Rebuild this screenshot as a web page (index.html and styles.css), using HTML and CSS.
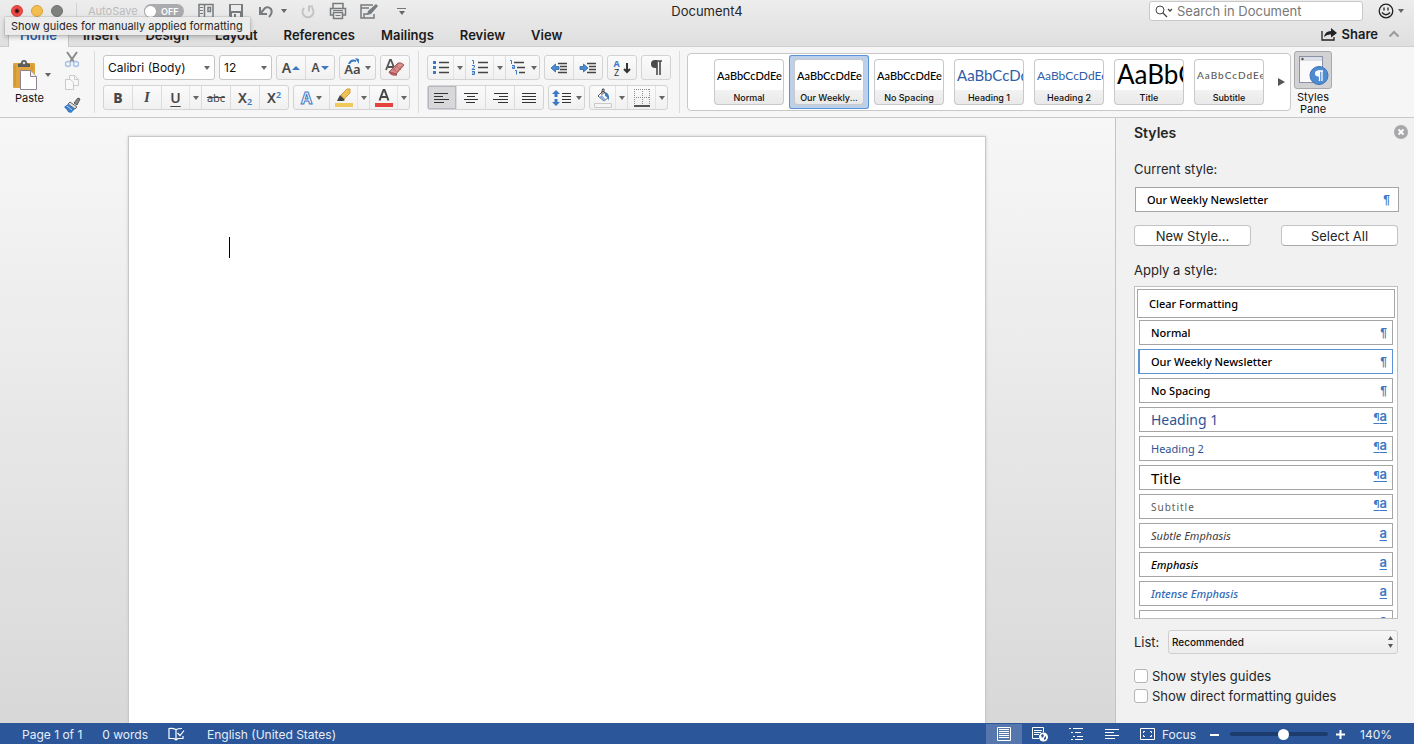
FILE: index.html
```html
<!DOCTYPE html>
<html lang="en">
<head>
    <meta charset="UTF-8">
    <meta name="viewport" content="width=device-width, initial-scale=1.0">
    <title>Document4</title>
    <link rel="stylesheet" href="styles.css">
</head>
<body>
    <header class="titlebar">
        <div class="quick">
            <button class="light red" aria-label="Close"></button>
            <button class="light yellow" aria-label="Minimize"></button>
            <button class="light gray" aria-label="Zoom"></button>
            <span class="line"></span>
            <span class="autosave">AutoSave</span>
            <button class="toggle" role="switch" aria-checked="false" aria-label="AutoSave"><i></i>OFF</button>
            <button class="tool" aria-label="Sidebar"><svg width="18" height="18" viewBox="0 0 18 18"><path d="M2 2.500h14v13H2zM7.500 2v14M11 5.500h2.500v4H11z" fill="none" stroke="#777b7d" stroke-width="1.500"/><path d="M3 5.500h3M3 8.500h3M3 11.500h3" stroke="#777b7d"/></svg></button>
            <button class="tool" aria-label="Save"><svg width="18" height="18" viewBox="0 0 18 18"><path d="M2 2h14v14H4l-2-2z" fill="#777b7d"/><path d="M4 3h10v6H4zM5 11h8v5H5z" fill="#ececec"/><path d="M7 12h2v4H7z" fill="#777b7d"/></svg></button>
            <button class="tool undo" aria-label="Undo"><svg width="18" height="18" viewBox="0 0 18 18"><path d="M3 5v7h7" fill="none" stroke="#777b7d" stroke-width="2"/><path d="M3 12L8 6q3-2 6 1 2 4-2 8" fill="none" stroke="#777b7d" stroke-width="2"/></svg><i class="caret"></i></button>
            <button class="tool" aria-label="Redo"><svg width="18" height="18" viewBox="0 0 18 18"><path d="M5 6a5.500 5.500 0 1 0 8 0M14 4.500h-4v5" fill="none" stroke="#c4c4c4" stroke-width="2"/></svg></button>
            <button class="tool" aria-label="Print"><svg width="18" height="18" viewBox="0 0 18 18"><path d="M4 6V1.500h10V6M4 13H1.500V6.500h15V13H14M4.500 10.500h9v6h-9z" fill="none" stroke="#777b7d" stroke-width="1.500"/><path d="M4 8.500h10M6.500 13.500h5" stroke="#777b7d"/></svg></button>
            <button class="tool" aria-label="Edit"><svg width="20" height="18" viewBox="0 0 20 18"><path d="M14 3H2v13h13v-4M2 6h8M5 16v-4h4" fill="none" stroke="#777b7d" stroke-width="1.500"/><path d="M8 13l1-4 8-7 2 2-7 8z" fill="#777b7d"/></svg></button>
            <button class="tool more" aria-label="Customize"><i></i><i class="caret"></i></button>
        </div>
        <h1>Document4</h1>
        <div class="title-right">
            <label class="search">
                <svg width="20" height="14" viewBox="0 0 20 14"><circle cx="6" cy="6" r="4" fill="none" stroke="#444"/><path d="M9 9l4 4M14 5l2 2 2-2" fill="none" stroke="#444" stroke-width="1.300"/></svg>
                <input type="search" placeholder="Search in Document" aria-label="Search in Document">
            </label>
            <button class="tool smile" aria-label="Feedback"><svg width="16" height="16" viewBox="0 0 16 16"><circle cx="8" cy="8" r="6.800" fill="none" stroke="#222" stroke-width="1.300"/><path d="M6 4.500v3M10 4.500v3M4 9.500q4 4.500 8 0" fill="none" stroke="#222" stroke-width="1.300"/></svg><i class="caret"></i></button>
        </div>
    </header>

    <nav class="tabs">
        <a href="#" class="active">Home</a>
        <a href="#">Insert</a>
        <a href="#">Design</a>
        <a href="#">Layout</a>
        <a href="#">References</a>
        <a href="#">Mailings</a>
        <a href="#">Review</a>
        <a href="#">View</a>
        <button class="share"><svg width="16" height="14" viewBox="0 0 16 14"><path d="M1 4v9h12v-3" fill="none" stroke="#222" stroke-width="1.300"/><path d="M3 10q1-6 7-6V1l6 5-6 4.500V7.500q-4-.5-7 2.500z" fill="#222"/></svg>Share</button>
        <button class="collapse" aria-label="Collapse ribbon"><svg width="12" height="8" viewBox="0 0 12 8"><path d="M1.500 6.500L6 2l4.500 4.500" fill="none" stroke="#9b9b9b" stroke-width="2"/></svg></button>
    </nav>

    <section class="ribbon">
        <div class="paste-group">
            <button class="paste"><span><svg width="26" height="31" viewBox="0 0 26 31"><rect x="1" y="4" width="22" height="25" rx="1" fill="#dfa43b"/><path d="M3 6v21M20 6v6" stroke="#c98d28"/><path d="M6 8V5l3-1q0-3 3-3t3 3l3 1v3z" fill="#5c5c5c"/><circle cx="12" cy="4" r="1.300" fill="#ddd"/><path d="M8.500 11.500h10l6 6v13h-16z" fill="#fff" stroke="#8f8590"/><path d="M18.500 11.500v6h6" fill="#eee" stroke="#8f8590"/></svg><i class="caret"></i></span>Paste</button>
            <div class="clip">
                <button aria-label="Cut"><svg width="16" height="17" viewBox="0 0 16 17"><path d="M3 1l7 10M13 1L6 11" stroke="#8a8a8a" stroke-width="2"/><circle cx="4" cy="13" r="2.500" fill="none" stroke="#a9c4e6" stroke-width="1.500"/><circle cx="12" cy="13" r="2.500" fill="none" stroke="#a9c4e6" stroke-width="1.500"/></svg></button>
                <button aria-label="Copy"><svg width="16" height="17" viewBox="0 0 16 17"><path d="M5.500 1.500h5l4 4v6h-9zM10.500 1.500v4h4" fill="#f8f8f8" stroke="#cbcbcb"/><path d="M1.500 5.500h5l3 3v7h-8z" fill="#f8f8f8" stroke="#cbcbcb"/></svg></button>
                <button aria-label="Format painter"><svg width="18" height="17" viewBox="0 0 18 17"><path d="M11 6l4-5 2 1-3 6z" fill="#8b8b8b" stroke="#555"/><path d="M7 5l7 5-2 2-7-5z" fill="#ddd" stroke="#666"/><path d="M5 7l7 5-4 4-3-1-1-2-3-3z" fill="#3b7cc9"/><path d="M4 9l5 4" stroke="#bcd5f0"/></svg></button>
            </div>
        </div>

        <div class="group">
            <div class="row">
                <div class="combo font-name"><select aria-label="Font"><option>Calibri (Body)</option></select><i class="caret"></i></div>
                <div class="combo font-size"><select aria-label="Font size"><option>12</option></select><i class="caret"></i></div>
                <div class="seg">
                    <button aria-label="Grow font"><span class="glyph">A</span><i class="blue-up"></i></button>
                    <button aria-label="Shrink font"><span class="glyph small">A</span><i class="blue-down"></i></button>
                </div>
                <div class="seg"><button class="menu" aria-label="Change case"><span class="case">Aa<svg width="12" height="6" viewBox="0 0 12 6"><path d="M1 6Q3 1 8 3" fill="none" stroke="#3d78c4" stroke-width="2"/><path d="M7 0l4 1v5z" fill="#3d78c4"/></svg></span><i class="caret"></i></button></div>
                <div class="seg"><button aria-label="Clear formatting"><svg width="22" height="20" viewBox="0 0 22 20"><path d="M2 12L6 2h1l4 10M4 9h5" fill="none" stroke="#555" stroke-width="1.800"/><path d="M5 14L14 5q3-1 6 2l-8 9q-5 1-7-2z" fill="#d98f8d" stroke="#9c5555"/><path d="M5 14q3 0 7 2l1 1q-6 1-8-3z" fill="#d9605c" stroke="#9c5555"/><path d="M9 11l5 4M12 8l5 4M14 6l-5 7M18 8l-5 6" stroke="#b96866"/></svg></button></div>
            </div>
            <div class="row">
                <div class="seg">
                    <button class="glyph bold">B</button>
                    <button class="glyph italic">I</button>
                    <button class="glyph under main">U</button><button class="drop" aria-label="Underline options"><i class="caret"></i></button>
                    <button class="glyph strike">abc</button>
                    <button class="glyph">X<sub>2</sub></button>
                    <button class="glyph">X<sup>2</sup></button>
                </div>
                <div class="seg">
                    <button class="menu effects"><span>A</span><i class="caret"></i></button>
                    <button class="main" aria-label="Highlight"><svg width="20" height="20" viewBox="0 0 20 20"><path d="M1 15h18v4H1z" fill="#efc95b"/><path d="M7 7l6-6h3v4l-6 6z" fill="#efc054" stroke="#d79d35"/><path d="M6 7l5 5-2 1H3z" fill="#444"/></svg></button><button class="drop" aria-label="Highlight colors"><i class="caret"></i></button>
                    <button class="main" aria-label="Font color"><svg width="20" height="20" viewBox="0 0 20 20"><path d="M1 15h18v4H1z" fill="#e4433d"/><path d="M5.500 12.500L9.500 2h1l4 10.500M7 9h6" fill="none" stroke="#484848" stroke-width="2"/></svg></button><button class="drop" aria-label="Font colors"><i class="caret"></i></button>
                </div>
            </div>
        </div>

        <div class="group">
            <div class="row">
                <div class="seg">
                    <button class="main" aria-label="Bullets"><svg width="18" height="16" viewBox="0 0 18 16"><path d="M7 2.500h10M7 7.500h10M7 12.500h10" stroke="#444" stroke-width="1.300"/><path d="M1 1h3v3H1zM1 6h3v3H1zM1 11h3v3H1z" fill="#3d78c4"/></svg></button><button class="drop" aria-label="Bullet styles"><i class="caret"></i></button>
                    <button class="main" aria-label="Numbering"><svg width="18" height="16" viewBox="0 0 18 16"><path d="M7 2.500h10M7 7.500h10M7 12.500h10" stroke="#444" stroke-width="1.300"/><path d="M1 .5h1.500v3.500M1 5.500h2.500v1.500L1 9.500h3M1 11.500h2.500v3H1M1 13h2" fill="none" stroke="#3d78c4"/></svg></button><button class="drop" aria-label="Number styles"><i class="caret"></i></button>
                    <button class="menu" aria-label="Multilevel list"><svg width="18" height="16" viewBox="0 0 18 16"><path d="M5 2.500h10M8 7.500h8M10 12.500h6" stroke="#444" stroke-width="1.300"/><path d="M1 .5h1.500v3.500M3 5.500h2.500v3H3.500v-1.500h2M6 10.500h1.500v4" fill="none" stroke="#3d78c4"/></svg><i class="caret"></i></button>
                </div>
                <div class="seg">
                    <button aria-label="Decrease indent"><svg width="18" height="14" viewBox="0 0 18 14"><path d="M8 2.500h9M10 5.500h7M10 8.500h7M8 11.500h9" stroke="#444" stroke-width="1.300"/><path d="M1 7l4.500-4v2.500H9v3H5.500V11z" fill="#4c8bd0" stroke="#2e67a8" stroke-width=".8"/></svg></button>
                    <button aria-label="Increase indent"><svg width="18" height="14" viewBox="0 0 18 14"><path d="M8 2.500h9M10 5.500h7M10 8.500h7M8 11.500h9" stroke="#444" stroke-width="1.300"/><path d="M9 7L4.500 3v2.500H1v3h3.500V11z" fill="#4c8bd0" stroke="#2e67a8" stroke-width=".8"/></svg></button>
                </div>
                <div class="seg"><button aria-label="Sort"><span class="sort"><b>A</b>Z</span><svg width="8" height="12" viewBox="0 0 8 12"><path d="M4 1v8M1 7l3 3 3-3" fill="none" stroke="#333" stroke-width="2"/></svg></button></div>
                <div class="seg"><button aria-label="Show marks"><svg width="14" height="16" viewBox="0 0 14 16"><path d="M7 1h6M8 1v14M11 1v14" stroke="#4a4a4a" stroke-width="1.600"/><path d="M8 0H6a4 4 0 0 0 0 8h2z" fill="#4a4a4a"/></svg></button></div>
            </div>
            <div class="row">
                <div class="seg">
                    <button class="on" aria-label="Align left"><svg width="16" height="12" viewBox="0 0 16 12"><path d="M0 1.500h14M0 4.500h9M0 7.500h15M0 10.500h10" stroke="#333" stroke-width="1.200"/></svg></button>
                    <button aria-label="Center"><svg width="16" height="12" viewBox="0 0 16 12"><path d="M1 1.500h14M4 4.500h8M1 7.500h14M3 10.500h9" stroke="#333" stroke-width="1.200"/></svg></button>
                    <button aria-label="Align right"><svg width="16" height="12" viewBox="0 0 16 12"><path d="M2 1.500h14M7 4.500h9M1 7.500h15M6 10.500h10" stroke="#333" stroke-width="1.200"/></svg></button>
                    <button aria-label="Justify"><svg width="16" height="12" viewBox="0 0 16 12"><path d="M1 1.500h14M1 4.500h14M1 7.500h14M1 10.500h14" stroke="#333" stroke-width="1.200"/></svg></button>
                </div>
                <div class="seg"><button class="menu" aria-label="Line spacing"><svg width="20" height="16" viewBox="0 0 20 16"><path d="M10 3.500h9M10 6.500h9M10 9.500h9M10 12.500h9" stroke="#333" stroke-width="1.200"/><path d="M4 0l4 4H5.500v3h-3V4H0zM4 16l4-4H5.500V9h-3v3H0z" fill="#3d78c4"/></svg><i class="caret"></i></button></div>
                <div class="seg">
                    <button class="main" aria-label="Shading"><svg width="20" height="20" viewBox="0 0 20 20"><path d="M1.500 15.500h17v4h-17z" fill="#f4f4f4" stroke="#c9c9c9"/><path d="M5 8l5-5 6 6-5 4z" fill="#fff" stroke="#555"/><path d="M9 7V3q0-3 2-2v5" fill="none" stroke="#444"/><path d="M12 4q5 1 4 9-1-4-4-5z" fill="#3d78c4"/><path d="M6 9l5 4 2-1-4-5z" fill="#8cb2df"/></svg></button><button class="drop" aria-label="Shading colors"><i class="caret"></i></button>
                    <button class="main" aria-label="Borders"><svg width="18" height="18" viewBox="0 0 18 18"><path d="M1.500 0v16M9.500 0v16M16.500 0v16M1 .5h16M1 8.500h16" stroke="#8d8d8d" stroke-dasharray="1 1"/><path d="M1 17h16" stroke="#222" stroke-width="1.500"/></svg></button><button class="drop" aria-label="Border styles"><i class="caret"></i></button>
                </div>
            </div>
        </div>

        <div class="gallery">
            <button class="card"><b>AaBbCcDdEe</b><span>Normal</span></button>
            <button class="card selected"><b>AaBbCcDdEe</b><span>Our Weekly...</span></button>
            <button class="card"><b>AaBbCcDdEe</b><span>No Spacing</span></button>
            <button class="card h1"><b>AaBbCcDd</b><span>Heading 1</span></button>
            <button class="card h2"><b>AaBbCcDdEe</b><span>Heading 2</span></button>
            <button class="card big"><b>AaBbC</b><span>Title</span></button>
            <button class="card sub"><b>AaBbCcDdEe</b><span>Subtitle</span></button>
            <button class="next" aria-label="More styles"><i></i></button>
        </div>
        <button class="pane-button"><span><svg width="32" height="32" viewBox="0 0 32 32"><rect x="2.500" y="2.500" width="23" height="26" fill="#fafafa" stroke="#8a92a8"/><path d="M3 3h22v4H3z" fill="#dcdfe6"/><circle cx="5.500" cy="5" r="1.200" fill="#555"/><circle cx="22" cy="21.500" r="9" fill="#4f8bd0" stroke="#3972b8"/><path d="M21 17h5M22.500 17v10M25 17v10" stroke="#fff" stroke-width="1.300"/><path d="M23 16.500h-2a3 3 0 0 0 0 6h2z" fill="#fff"/></svg></span>Styles<br>Pane</button>
    </section>

    <main class="workspace">
        <div class="canvas">
            <div class="page" role="textbox" aria-label="Document"><span class="cursor"></span></div>
        </div>
        <aside class="pane">
            <div class="pane-head">
                <h2>Styles</h2>
                <button class="close" aria-label="Close pane"><svg width="14" height="14" viewBox="0 0 14 14"><circle cx="7" cy="7" r="7" fill="#a8a8aa"/><path d="M4.500 4.500l5 5M9.500 4.500l-5 5" stroke="#fff" stroke-width="1.800"/></svg></button>
            </div>
            <p>Current style:</p>
            <div class="style current">Our Weekly Newsletter <i>¶</i></div>
            <div class="pane-buttons">
                <button>New Style...</button>
                <button>Select All</button>
            </div>
            <p>Apply a style:</p>
            <div class="list">
                <button class="style clear">Clear Formatting</button>
                <button class="style">Normal <i>¶</i></button>
                <button class="style active">Our Weekly Newsletter <i>¶</i></button>
                <button class="style">No Spacing <i>¶</i></button>
                <button class="style heading1">Heading 1 <u><small>¶</small>a</u></button>
                <button class="style heading2">Heading 2 <u><small>¶</small>a</u></button>
                <button class="style title">Title <u><small>¶</small>a</u></button>
                <button class="style subtitle">Subtitle <u><small>¶</small>a</u></button>
                <button class="style subtle"><em>Subtle Emphasis</em> <u>a</u></button>
                <button class="style"><em>Emphasis</em> <u>a</u></button>
                <button class="style intense"><em>Intense Emphasis</em> <u>a</u></button>
                <button class="style"><em>Strong</em> <u>a</u></button>
            </div>
            <div class="filter">
                <label for="list">List:</label>
                <div class="picker">
                    <select id="list"><option>Recommended</option></select>
                    <svg width="7" height="14" viewBox="0 0 7 14"><path d="M3.500 1L6 5H1zM3.500 13L1 9h5z" fill="#555"/></svg>
                </div>
            </div>
            <label class="check"><input type="checkbox">Show styles guides</label>
            <label class="check"><input type="checkbox">Show direct formatting guides</label>
        </aside>
    </main>

    <footer class="status">
        <span>Page 1 of 1</span>
        <span>0 words</span>
        <svg width="17" height="14" viewBox="0 0 17 14"><path d="M8 2.500v11M8 2.500Q5 1 1 1.500v10h5l2 1.500M8 2.500q2-1 6-1M8 13l2-1.500h5V9M9.500 6l2.500 2.500 4-5" fill="none" stroke="#fff" stroke-width="1.200"/></svg>
        <span>English (United States)</span>
        <div class="views">
            <button class="on" aria-label="Print layout"><svg width="16" height="14" viewBox="0 0 16 14"><path d="M1.500 .5h13v13h-13zM3 2.500h10M3 4.500h10M3 6.500h10M3 8.500h10M3 10.500h10" fill="none" stroke="#fff"/></svg></button>
            <button aria-label="Web layout"><svg width="18" height="16" viewBox="0 0 18 16"><path d="M8 12.500H1.500v-11h11V6M3 4.500h8M3 6.500h7M3 8.500h5" fill="none" stroke="#fff"/><circle cx="12.500" cy="11" r="4.500" fill="#fff"/><path d="M10 9l2-1 1 2-2 2zM13 12l2-2v3l-2 1z" fill="#2b579a"/></svg></button>
            <button aria-label="Outline"><svg width="16" height="14" viewBox="0 0 16 14"><path d="M1 1.500h2M5 1.500h10M3 5.500h2M7 5.500h6M5 9.500h2M9 9.500h6M3 12.500h2M7 12.500h8" stroke="#fff"/></svg></button>
            <button aria-label="Draft"><svg width="16" height="14" viewBox="0 0 16 14"><path d="M1 2.500h14M1 5.500h9M1 8.500h14M1 11.500h10" stroke="#fff" stroke-width="1.200"/></svg></button>
        </div>
        <button class="focus"><svg width="15" height="12" viewBox="0 0 15 12"><path d="M.5.500h14v11H.5z" fill="none" stroke="#fff"/><path d="M3.500 5V3.500H5M10 3.500h1.500V5M11.500 7v1.500H10M5 8.500H3.500V7" fill="none" stroke="#fff"/></svg>Focus</button>
        <button class="zoom" aria-label="Zoom out"><svg width="9" height="9" viewBox="0 0 9 9"><path d="M0 5h9" stroke="#fff" stroke-width="2"/></svg></button>
        <input type="range" min="0" max="100" value="55" aria-label="Zoom">
        <button class="zoom" aria-label="Zoom in"><svg width="9" height="9" viewBox="0 0 9 9"><path d="M0 4.500h9M4.500 0v9" stroke="#fff" stroke-width="2"/></svg></button>
        <span class="percent">140%</span>
    </footer>

    <div class="tooltip" role="tooltip">Show guides for manually applied formatting</div>
</body>
</html>
```
FILE: styles.css
```css
* { box-sizing: border-box; }
body { margin: 0; height: 100vh; overflow: hidden; display: flex; flex-direction: column; font: 13px Inter, sans-serif; color: #262626; background: #f1f1f1; }
button, select, input { font: inherit; color: inherit; margin: 0; }
button { padding: 0; border: 0; background: none; display: flex; align-items: center; justify-content: center; }
svg { display: block; flex: none; }
h1, h2, p { margin: 0; }
.caret { border: 3px solid transparent; border-top: 4px solid #666; border-bottom: 0; flex: none; }

/* title bar */
.titlebar { height: 22px; flex: none; display: grid; grid-template-columns: 1fr auto 1fr; align-items: center; background: linear-gradient(#ededed, #e6e6e6); }
.titlebar h1 { font-size: 13px; font-weight: 400; }
.quick { display: flex; align-items: center; padding-left: 11px; }
.light { width: 12px; height: 12px; border-radius: 50%; margin-right: 8px; border: 1px solid #d33f38; background: radial-gradient(circle, #301010 1px, #f04b43 3px); }
.light.yellow { background: #f3be4f; border-color: #d9a33a; }
.light.gray { background: #7e827e; border-color: #6f736f; margin-right: 13px; }
.line { width: 1px; height: 16px; background: #d2d2d2; margin-right: 11px; }
.autosave { font-size: 11px; color: #bababa; width: 56px; }
.toggle { width: 40px; height: 14px; border-radius: 7px; background: #aaabae; color: #fff; font-size: 9px; font-weight: 600; justify-content: flex-start; gap: 4px; margin-right: 13px; }
.toggle i { width: 13px; height: 13px; border-radius: 50%; background: #fff; border: 1px solid #a5a5a5; }
.tool { margin-right: 12px; }
.undo { gap: 6px; }
.more { flex-direction: column; gap: 2px; margin-left: 6px; }
.more i:first-child { width: 9px; height: 1px; background: #777; }
.title-right { display: flex; justify-content: flex-end; align-items: center; }
.search { width: 214px; height: 20px; display: flex; align-items: center; gap: 3px; padding: 0 4px; background: #fff; border: 1px solid #c8c8c8; border-radius: 3px; }
.search input { flex: 1; min-width: 0; border: 0; padding: 0; outline: 0; background: none; }
.search input::placeholder { color: #777; }
.smile { gap: 4px; margin: 0 10px 0 15px; }

/* tabs */
.tabs { height: 25px; flex: none; display: flex; align-items: center; padding-left: 8px; background: linear-gradient(#e6e6e6, #dfdfdf); border-bottom: 1px solid #cfcfcf; }
.tabs a { height: 25px; line-height: 27px; padding: 0 13px; font-weight: 600; color: #1b1b1b; text-decoration: none; }
.tabs .active { color: #2b5fae; background: #f7f7f7; border: 1px solid #c5c5c5; border-width: 0 1px; padding: 0 11px; margin-right: 1px; }
.share { margin-left: auto; gap: 5px; font-weight: 600; color: #1b1b1b; }
.collapse { margin: 0 14px 0 10px; }

/* ribbon */
.ribbon { height: 71px; flex: none; display: flex; align-items: flex-start; padding-top: 4px; background: #f6f6f6; border-bottom: 1px solid #c9c9c9; }
.paste-group { width: 95px; height: 62px; display: flex; padding-left: 12px; border-right: 1px solid #dcdcdc; }
.paste { flex-direction: column; align-items: flex-start; font-size: 11px; gap: 1px; width: 52px; color: #111; padding-left: 3px; }
.paste span { display: flex; align-items: center; gap: 7px; margin-left: -3px; }
.clip { display: flex; flex-direction: column; gap: 6px; }
.clip button { width: 16px; height: 17px; }
.group { height: 62px; padding: 4px 8px; display: flex; flex-direction: column; gap: 5px; border-right: 1px solid #dcdcdc; }
.row { display: flex; gap: 4px; }
.combo { height: 25px; display: flex; align-items: center; background: #fff; border: 1px solid #c6c6c6; border-radius: 3px; padding-right: 4px; }
.combo select, .picker select { appearance: none; border: 0; background: none; outline: 0; flex: 1; min-width: 0; padding: 0 4px; }
.combo select { font-size: 12px; color: #111; }
.font-name { width: 112px; }
.font-size { width: 53px; }
.seg { height: 25px; display: flex; border: 1px solid #d3d3d3; border-radius: 3px; background: linear-gradient(#fbfbfb, #f0f0f0); }
.seg button { width: 29px; border-left: 1px solid #dcdcdc; }
.seg button:first-child { width: 28px; border-left: 0; }
.seg .main { width: 28px; }
.seg .main:first-child { width: 25px; }
.seg .drop { width: 12px; border-left-color: #e3e3e3; }
.seg .menu { width: 34px; gap: 4px; }
.seg .menu:first-child { width: 35px; }
.seg .on { background: #d8d8da; box-shadow: inset 0 0 0 1px #b5b8c0; }
.glyph, .seg .glyph { font: 600 14px "Noto Sans", sans-serif; color: #484848; }
.seg .small { font-size: 12px; }
.seg .bold { font-weight: 800; }
.seg .italic { font: italic bold 15px "Liberation Serif", serif; }
.seg .under { text-decoration: underline; text-underline-offset: 3px; }
.seg .strike { font-size: 11px; font-weight: 400; text-decoration: line-through; }
.glyph sub, .glyph sup { font-size: 9px; color: #3d78c4; line-height: 1; }
.glyph sub { align-self: flex-end; margin-bottom: 3px; }
.glyph sup { align-self: flex-start; margin-top: 4px; }
.blue-up, .blue-down { border: 4px solid transparent; margin-left: 1px; }
.blue-up { border-bottom-color: #3d78c4; border-top: 0; }
.blue-down { border-top-color: #3d78c4; border-bottom: 0; }
.case { position: relative; font: 600 13px "Noto Sans", sans-serif; color: #484848; padding-top: 3px; line-height: 16px; }
.case svg { position: absolute; right: 1px; top: 0; }
.effects span { font: bold 16px "Noto Sans", sans-serif; color: #fff; -webkit-text-stroke: 1px #3d78c4; }
.sort { display: flex; flex-direction: column; font: 9px/9px "Noto Sans", sans-serif; margin-right: 3px; color: #333; }
.sort b { color: #3d78c4; }

.gallery { flex: 1; max-width: 604px; height: 58px; margin: 2px 3px 0 7px; padding-left: 21px; display: flex; align-items: center; background: #fff; border: 1px solid #c8c8c8; border-radius: 4px; }
.card { width: 80px; height: 54px; padding: 4px 5px; flex-direction: column; align-items: stretch; color: #111; flex: none; }
.card b { height: 31px; padding: 0 2px; border: 1px solid #c9c9c9; border-bottom: 0; border-radius: 4px 4px 0 0; background: #fff; font: 500 11px/31px Lato, sans-serif; color: #000; overflow: hidden; white-space: nowrap; text-align: left; }
.card span { height: 15px; line-height: 15px; font-size: 9px; background: linear-gradient(#f2f2f2, #e9e9e9); border: 1px solid #c9c9c9; border-top: 0; border-radius: 0 0 4px 4px; font-weight: 500; white-space: nowrap; }
.card.selected { background: #bcd0ea; border-radius: 3px; box-shadow: inset 0 0 0 1px #5b93d6; }
.h1 b { font-size: 15px; font-weight: 400; color: #2f5ea8; }
.h2 b { font-size: 12px; font-weight: 400; color: #2f5ea8; }
.big b { font-size: 26px; font-weight: 400; line-height: 29px; }
.sub b { font-size: 10px; color: #5a5a5a; letter-spacing: 1px; }
.next { margin-left: auto; margin-right: 5px; }
.next i { border: 4px solid transparent; border-left: 7px solid #555; border-right: 0; }
.pane-button { flex-direction: column; font-size: 11px; line-height: 12px; color: #111; }
.pane-button span { width: 38px; height: 38px; display: flex; align-items: center; justify-content: center; background: #d2d2d4; border: 1px solid #a9a9ab; border-radius: 3px; margin-bottom: 2px; }

/* document and styles pane */
.workspace { flex: 1; min-height: 0; display: flex; }
.canvas { flex: 1; display: flex; justify-content: center; padding: 18px 129px 0 128px; background: linear-gradient(#f7f7f7, #d8d8d8); border-right: 1px solid #c4c4c4; }
.page { flex: 1; padding: 100px; background: #fff; border: 1px solid #c8c8c8; border-bottom: 0; box-shadow: 0 0 3px #ccc; }
.cursor { display: block; width: 1px; height: 21px; background: #000; }
.pane { width: 298px; flex: none; display: flex; flex-direction: column; padding: 4px 16px 17px 18px; background: #f1f1f1; }
.pane p { line-height: 17px; }
.pane-head { display: flex; justify-content: space-between; align-items: center; height: 20px; margin: 0 -10px 19px 0; }
.pane-head h2 { font-size: 14px; font-weight: 600; }
.style { height: 25px; flex: none; display: flex; justify-content: space-between; align-items: center; padding: 0 5px 0 11px; background: #fff; border: 1px solid #a5a5a5; font: 500 11px "Noto Sans", sans-serif; color: #000; }
.style i { font: 600 12px "Liberation Sans", sans-serif; color: #3d78c4; }
.style u { font: 600 13px/13px Inter, sans-serif; color: #3d78c4; text-underline-offset: 2px; margin-bottom: 5px; }
.style small { font-size: 10px; }
.current { margin: 9px -1px 13px 1px; padding-right: 8px; }
.pane-buttons { display: flex; justify-content: space-between; margin-bottom: 16px; }
.pane-buttons button { width: 117px; height: 21px; background: #fff; border: 1px solid #c3c3c3; border-bottom-color: #aaa; border-radius: 4px; }
.list { flex: 1; min-height: 0; overflow: hidden; display: flex; flex-direction: column; gap: 4px; margin-top: 7px; padding: 2px 4px; background: #fff; border: 1px solid #bfbfbf; }
.clear { height: 29px; margin: 0 -2px -2px; }
.active.style { border-color: #5b93d6; box-shadow: -1px 0 #5b93d6; }
.heading1 { font-size: 14px; color: #2f5496; font-weight: 400; }
.heading2 { font-size: 11px; color: #2f5496; font-weight: 400; }
.title { font-size: 15px; font-weight: 400; }
.subtitle { font-size: 10px; font-weight: 400; color: #5a5a5a; letter-spacing: 1px; }
.subtitle u { letter-spacing: 0; }
.subtle { font-weight: 400; color: #404040; }
.intense { color: #2e6cb8; }
.filter { display: flex; align-items: center; justify-content: space-between; margin: 11px 0 12px; }
.picker { width: 230px; height: 24px; display: flex; align-items: center; padding-right: 3px; border: 1px solid #cfcfcf; border-radius: 3px; background: linear-gradient(#f6f6f6, #ececec); }
.picker select { font-size: 10px; font-weight: 500; color: #111; padding: 0 3px; }
.check { display: flex; align-items: center; gap: 4px; height: 20px; }
.check input { appearance: none; width: 14px; height: 14px; border: 1px solid #b5b5b5; border-radius: 3px; background: #fff; }

/* status bar */
.status { height: 21px; flex: none; display: flex; align-items: center; padding: 1px 22px 0; background: #2b579a; color: #e8eef7; font-size: 12px; }
.status > span { margin-right: 20px; }
.status > svg { margin-right: 22px; }
.views { display: flex; margin-left: auto; }
.views button { width: 36px; height: 21px; }
.views .on { background: #5577ad; }
.focus { gap: 7px; margin: 0 14px 0 10px; }
.status input { appearance: none; width: 98px; height: 4px; border-radius: 2px; background: #1c3c6d; margin: 0 8px 0 11px; }
.status input::-webkit-slider-thumb { appearance: none; width: 11px; height: 11px; border-radius: 50%; background: #fff; }
.status .percent { margin: 0 0 0 15px; }

.tooltip { position: absolute; left: 5px; top: 17px; padding: 0 7px 0 6px; height: 18px; line-height: 18px; font-size: 11px; background: #ececec; box-shadow: 0 0 1px #888, 0 2px 5px rgba(0, 0, 0, .25); white-space: nowrap; }
```
